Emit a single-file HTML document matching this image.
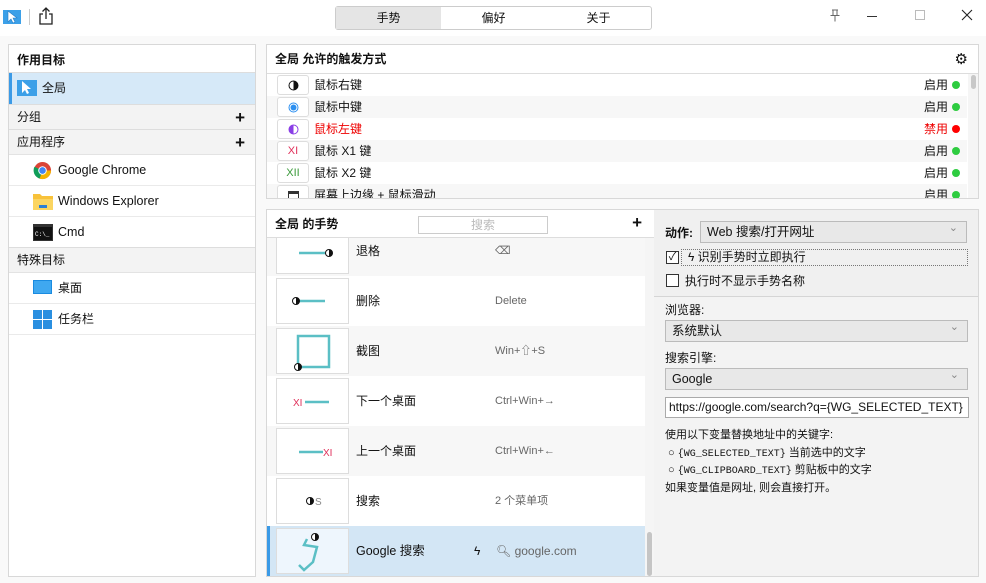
<!DOCTYPE html>
<html><head><meta charset="utf-8"><style>
*{box-sizing:border-box;margin:0;padding:0}
body{width:986px;height:583px;overflow:hidden;background:#f9f9f9;font-family:"Liberation Sans","Noto Sans CJK SC",sans-serif;font-size:12px;color:#111;position:relative}
.a{position:absolute}
.title{left:0;top:0;width:986px;height:36px;background:#fff}
.seg{left:335px;top:6px;width:317px;height:24px;border:1px solid #ccc;border-radius:3px;background:#fff;display:flex}
.seg div{flex:1;text-align:center;line-height:22px;font-size:12px}
.panel{background:#fff;border:1px solid #d8d8d8}
.lh{font-weight:bold;font-size:12px}
.row{position:absolute;left:0;right:0}
.grp{background:#f3f3f3;border-top:1px solid #ddd;border-bottom:1px solid #e3e3e3}
.sep{border-bottom:1px solid #eaeaea}
.plus{position:absolute;right:10px;font-size:17px;font-weight:bold;line-height:1}
.trow{position:absolute;left:0;width:700px;height:22px;line-height:22px}
.kbox{position:absolute;left:10px;top:1px;width:32px;height:20px;border:1px solid #ddd;border-radius:3px;background:#fff;text-align:center;line-height:18px;font-size:11px}
.kbox svg{position:absolute;left:10px;top:4px}
.st{position:absolute;right:19px;text-align:right}
.dot{position:absolute;right:7px;top:7px;width:8px;height:8px;border-radius:50%;background:#2ecc40}
.g{position:absolute;left:0;width:378px;height:50px}
.th{position:absolute;left:9px;top:2px;width:73px;height:46px;border:1px solid #ddd;background:#fff}
.gn{position:absolute;left:89px;top:0;line-height:50px;font-size:12px}
.gk{position:absolute;left:228px;top:0;line-height:50px;color:#666;font-size:11px}
.sel{border:1px solid #bbb;background:#e8e8e8;height:22px;line-height:20px;padding-left:6px;font-size:12.5px}
.sel:after{content:"⌄";position:absolute;right:8px;top:-4px;color:#888;font-size:11px}
.mono{font-family:"Liberation Mono","DejaVu Sans Mono",monospace;font-size:10px}
</style></head><body>
<div class="a title"></div>
<svg class="a" style="left:3px;top:9px" width="18" height="16"><rect x="0" y="1" width="18" height="14" fill="#3ca0e8"/><path d="M5 2 L5 13 L8 10 L10 14 L12 13 L10 9 L14 9 Z" fill="#fff" stroke="#2a7fc8" stroke-width=".6"/></svg>
<div class="a" style="left:29px;top:9px;width:1px;height:16px;background:#ccc"></div>
<svg class="a" style="left:38px;top:7px" width="16" height="18" fill="none" stroke="#222" stroke-width="1.3"><path d="M5 7H2v10h12V7h-3"/><path d="M8 12V1M4.5 4.5L8 1l3.5 3.5"/></svg>
<div class="a seg"><div style="background:#e5e5e5">手势</div><div>偏好</div><div>关于</div></div>
<svg class="a" style="left:829px;top:9px" width="12" height="13" fill="none" stroke="#666" stroke-width="1"><path d="M3 1h6M4 1v5M8 1v5M1.5 6.5h9M6 6.5v6"/></svg>
<div class="a" style="left:867px;top:16px;width:10px;height:1px;background:#333"></div>
<div class="a" style="left:915px;top:10px;width:10px;height:10px;border:1px solid #bbb"></div>
<svg class="a" style="left:961px;top:9px" width="12" height="12" stroke="#222" stroke-width="1.1"><path d="M1 1L11 11M11 1L1 11"/></svg>

<div class="a panel" style="left:8px;top:44px;width:248px;height:533px">
 <div class="row lh" style="top:0;height:28px;line-height:30px;padding-left:8px;border-bottom:1px solid #ddd">作用目标</div>
 <div class="row" style="top:28px;height:31px;background:#d6e9f8;border-left:3px solid #3b9ae6">
  <svg class="a" style="left:5px;top:6px" width="20" height="18"><rect x="0" y="1" width="20" height="16" fill="#3ca0e8"/><path d="M5 2 L5 14 L8 11 L10 15 L12 14 L10 10 L14 10 Z" fill="#fff"/></svg>
  <span class="a" style="left:30px;top:0;line-height:30px">全局</span></div>
 <div class="row grp" style="top:59px;height:26px;line-height:24px;padding-left:8px">分组<span class="plus" style="top:4px">+</span></div>
 <div class="row grp" style="top:84px;height:26px;line-height:24px;padding-left:8px">应用程序<span class="plus" style="top:4px">+</span></div>
 <div class="row sep" style="top:110px;height:31px">
  <svg class="a" style="left:24px;top:6px" width="19" height="19" viewBox="0 0 20 20"><circle cx="10" cy="10" r="9" fill="#db4437"/><path d="M10 10 L1.5 6 A9 9 0 0 0 7 18.5Z" fill="#0f9d58"/><path d="M10 10 L7 18.5 A9 9 0 0 0 19 10Z" fill="#f4b400"/><circle cx="10" cy="10" r="4.5" fill="#fff"/><circle cx="10" cy="10" r="3.5" fill="#4285f4"/></svg>
  <span class="a" style="left:49px;line-height:30px;font-size:12.5px">Google Chrome</span></div>
 <div class="row sep" style="top:141px;height:31px">
  <svg class="a" style="left:24px;top:6px" width="20" height="18"><path d="M0 2h7l2 2h11v14H0z" fill="#f8c23a"/><rect x="0" y="7" width="20" height="11" fill="#fbd561"/><rect x="6" y="13" width="8" height="3" fill="#2b7fd4"/></svg>
  <span class="a" style="left:49px;line-height:30px;font-size:12.5px">Windows Explorer</span></div>
 <div class="row" style="top:172px;height:31px">
  <svg class="a" style="left:24px;top:7px" width="20" height="17"><rect width="20" height="17" fill="#333"/><rect x="1" y="3" width="18" height="13" fill="#111"/><text x="2" y="12" fill="#fff" font-size="6" font-family="Liberation Mono">C:\_</text></svg>
  <span class="a" style="left:49px;line-height:30px;font-size:12.5px">Cmd</span></div>
 <div class="row grp" style="top:202px;height:26px;line-height:24px;padding-left:8px">特殊目标</div>
 <div class="row sep" style="top:228px;height:31px">
  <svg class="a" style="left:24px;top:7px" width="19" height="16"><rect width="19" height="14" fill="#1a8be0"/><rect x="1" y="1" width="17" height="12" fill="#3fa8f0"/></svg>
  <span class="a" style="left:49px;line-height:30px">桌面</span></div>
 <div class="row sep" style="top:259px;height:31px">
  <svg class="a" style="left:24px;top:6px" width="19" height="19"><rect width="9" height="9" fill="#2a8fe0"/><rect x="10" width="9" height="9" fill="#2a8fe0"/><rect y="10" width="9" height="9" fill="#2a8fe0"/><rect x="10" y="10" width="9" height="9" fill="#2a8fe0"/></svg>
  <span class="a" style="left:49px;line-height:30px">任务栏</span></div>
</div>

<div class="a panel" style="left:266px;top:44px;width:713px;height:155px;overflow:hidden">
 <div class="lh a" style="left:8px;top:0;line-height:29px">全局 允许的触发方式</div>
 <div class="a" style="right:10px;top:5px;font-size:15px">⚙</div>
 <div class="a" style="left:0;top:28px;width:713px;height:1px;background:#ddd"></div>
 <div class="trow" style="top:29px;background:#fff"><div class="kbox"><svg width="11" height="11"><circle cx="5.5" cy="5.5" r="4.5" fill="#fff" stroke="#111"/><path d="M5.5 1A4.5 4.5 0 0 1 5.5 10Z" fill="#111"/></svg></div><span class="a" style="left:47px">鼠标右键</span><span class="st">启用</span><div class="dot"></div></div>
 <div class="trow" style="top:51px;background:#f7f7f7"><div class="kbox"><svg width="11" height="11"><circle cx="5.5" cy="5.5" r="4.5" fill="#fff" stroke="#2b8ff0"/><circle cx="5.5" cy="5.5" r="3" fill="#2b8ff0"/></svg></div><span class="a" style="left:47px">鼠标中键</span><span class="st">启用</span><div class="dot"></div></div>
 <div class="trow" style="top:73px;background:#fff;color:#e00"><div class="kbox"><svg width="11" height="11"><circle cx="5.5" cy="5.5" r="4.5" fill="#fff" stroke="#8a3ee6"/><path d="M5.5 1A4.5 4.5 0 0 0 5.5 10Z" fill="#8a3ee6"/></svg></div><span class="a" style="left:47px">鼠标左键</span><span class="st">禁用</span><div class="dot" style="background:#f00"></div></div>
 <div class="trow" style="top:95px;background:#f7f7f7"><div class="kbox" style="color:#e0305a">XI</div><span class="a" style="left:47px">鼠标 X1 键</span><span class="st">启用</span><div class="dot"></div></div>
 <div class="trow" style="top:117px;background:#fff"><div class="kbox" style="color:#3a9a3a">XII</div><span class="a" style="left:47px">鼠标 X2 键</span><span class="st">启用</span><div class="dot"></div></div>
 <div class="trow" style="top:139px;background:#f7f7f7"><div class="kbox"><svg width="11" height="11"><rect x=".5" y="1.5" width="10" height="9" fill="#fff" stroke="#333"/><rect x=".5" y="1.5" width="10" height="2.5" fill="#333"/></svg></div><span class="a" style="left:47px">屏幕上边缘 + 鼠标滑动</span><span class="st">启用</span><div class="dot"></div></div>
 <div class="a" style="right:0;top:29px;width:10px;height:126px;background:#f5f5f5"></div>
 <div class="a" style="right:2px;top:30px;width:5px;height:14px;background:#c8c8c8;border-radius:3px"></div>
</div>

<div class="a panel" style="left:266px;top:209px;width:389px;height:368px;overflow:hidden">
 <div class="lh a" style="left:8px;top:0;line-height:28px">全局 的手势</div>
 <div class="a" style="left:151px;top:6px;width:130px;height:18px;border:1px solid #ccc;color:#bbb;text-align:center;line-height:16px">搜索</div>
 <div class="a" style="right:12px;top:3px;font-size:17px;font-weight:bold">+</div>
 <div class="a" style="left:0;top:27px;width:389px;height:1px;background:#ddd"></div>
 <div class="a" style="left:0;top:28px;width:378px;height:340px;overflow:hidden">
  <div class="g" style="top:-12px;background:#f7f7f7"><div class="th"><svg width="71" height="44"><line x1="22" y1="24" x2="48" y2="24" stroke="#5bbfc5" stroke-width="2.5"/><circle cx="52" cy="24" r="3.5" fill="#fff" stroke="#111"/><path d="M52 20.5A3.5 3.5 0 0 1 52 27.5Z" fill="#111"/></svg></div><span class="gn">退格</span><span class="gk">⌫</span></div>
  <div class="g" style="top:38px;background:#fff"><div class="th"><svg width="71" height="44"><line x1="22" y1="22" x2="48" y2="22" stroke="#5bbfc5" stroke-width="2.5"/><circle cx="19" cy="22" r="3.5" fill="#fff" stroke="#111"/><path d="M19 18.5A3.5 3.5 0 0 1 19 25.5Z" fill="#111"/></svg></div><span class="gn">删除</span><span class="gk">Delete</span></div>
  <div class="g" style="top:88px;background:#f7f7f7"><div class="th"><svg width="71" height="44"><rect x="21" y="7" width="31" height="31" fill="none" stroke="#5bbfc5" stroke-width="2.5"/><circle cx="21" cy="38" r="3.5" fill="#fff" stroke="#111"/><path d="M21 34.5A3.5 3.5 0 0 1 21 41.5Z" fill="#111"/></svg></div><span class="gn">截图</span><span class="gk">Win+⇧+S</span></div>
  <div class="g" style="top:138px;background:#fff"><div class="th"><svg width="71" height="44"><text x="16" y="27" fill="#e0305a" font-size="10" font-family="Liberation Sans">XI</text><line x1="28" y1="23" x2="52" y2="23" stroke="#5bbfc5" stroke-width="2.5"/></svg></div><span class="gn">下一个桌面</span><span class="gk">Ctrl+Win+→</span></div>
  <div class="g" style="top:188px;background:#f7f7f7"><div class="th"><svg width="71" height="44"><line x1="22" y1="23" x2="46" y2="23" stroke="#5bbfc5" stroke-width="2.5"/><text x="46" y="27" fill="#e0305a" font-size="10" font-family="Liberation Sans">XI</text></svg></div><span class="gn">上一个桌面</span><span class="gk">Ctrl+Win+←</span></div>
  <div class="g" style="top:238px;background:#fff"><div class="th"><svg width="71" height="44"><circle cx="33" cy="22" r="3.5" fill="#fff" stroke="#111"/><path d="M33 18.5A3.5 3.5 0 0 1 33 25.5Z" fill="#111"/><text x="38" y="26" fill="#888" font-size="10" font-family="Liberation Sans">S</text></svg></div><span class="gn">搜索</span><span class="gk">2 个菜单项</span></div>
  <div class="g" style="top:288px;background:#d3e6f5;border-left:3px solid #3b9ae6"><div class="th" style="left:6px;background:#eef6fd"><svg width="71" height="44"><path d="M30 10 L27 16 L40 18 L36 33 L27 41 L22 36" fill="none" stroke="#5bbfc5" stroke-width="2.5"/><circle cx="38" cy="8" r="3.5" fill="#fff" stroke="#111"/><path d="M38 4.5A3.5 3.5 0 0 1 38 11.5Z" fill="#111"/></svg></div><span class="gn" style="left:86px;font-size:12.5px">Google 搜索</span><span class="a" style="left:204px;line-height:50px;font-size:12px">ϟ</span><span class="gk" style="left:226px;font-size:12px">🔍︎ google.com</span></div>
 </div>
 <div class="a" style="left:378px;top:28px;width:10px;height:340px;background:#f5f5f5"></div>
 <div class="a" style="left:380px;top:322px;width:5px;height:44px;background:#c5c5c5;border-radius:3px"></div>
</div>

<div class="a" style="left:654px;top:209px;width:325px;height:368px;background:#f3f3f3;border:1px solid #d8d8d8;border-left:none">
 <div class="a" style="left:0;top:0;width:324px;height:87px;background:#f0f0f0;border-bottom:1px solid #d5d5d5"></div>
 <span class="a" style="left:11px;top:14px;font-weight:bold;font-size:12px">动作:</span>
 <div class="a sel" style="left:46px;top:11px;width:267px">Web 搜索/打开网址</div>
 <div class="a" style="left:12px;top:41px;width:13px;height:13px;border:1px solid #333;background:#fff;font-size:11px;line-height:11px;text-align:center">✓</div>
 <div class="a" style="left:27px;top:39px;width:287px;height:17px;border:1px dotted #777;line-height:15px;padding-left:6px">ϟ 识别手势时立即执行</div>
 <div class="a" style="left:12px;top:64px;width:13px;height:13px;border:1px solid #333;background:#fff"></div>
 <span class="a" style="left:31px;top:62px">执行时不显示手势名称</span>
 <span class="a" style="left:11px;top:91px">浏览器:</span>
 <div class="a sel" style="left:11px;top:110px;width:303px">系统默认</div>
 <span class="a" style="left:11px;top:139px">搜索引擎:</span>
 <div class="a sel" style="left:11px;top:158px;width:303px">Google</div>
 <div class="a" style="left:11px;top:187px;width:304px;height:21px;border:1px solid #aaa;background:#fff;line-height:19px;padding-left:3px;font-size:12px">https://google.com/search?q={WG_SELECTED_TEXT}</div>
 <span class="a" style="left:11px;top:216px;font-size:11px">使用以下变量替换地址中的关键字:</span>
 <span class="a" style="left:14px;top:234px;font-size:11px">○ <span class="mono">{WG_SELECTED_TEXT}</span> 当前选中的文字</span>
 <span class="a" style="left:14px;top:251px;font-size:11px">○ <span class="mono">{WG_CLIPBOARD_TEXT}</span> 剪贴板中的文字</span>
 <span class="a" style="left:11px;top:269px;font-size:11px">如果变量值是网址, 则会直接打开。</span>
</div>
</body></html>
